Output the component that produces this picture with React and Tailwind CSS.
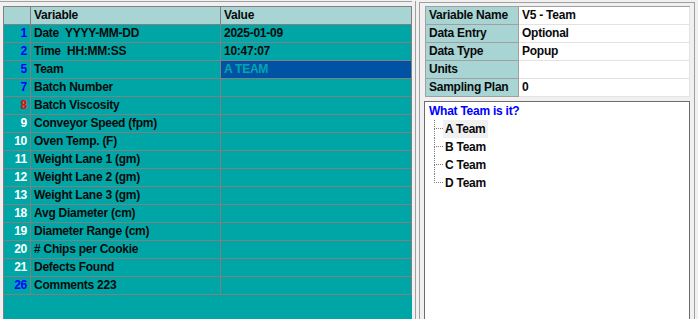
import React from 'react';

const rows = [
  { n: '1', c: 'text-[#0000ff]', label: 'Date  YYYY-MM-DD', value: '2025-01-09' },
  { n: '2', c: 'text-[#0000ff]', label: 'Time  HH:MM:SS', value: '10:47:07' },
  { n: '5', c: 'text-[#0000ff]', label: 'Team', value: 'A TEAM', selected: true },
  { n: '7', c: 'text-[#0000ff]', label: 'Batch Number', value: '' },
  { n: '8', c: 'text-[#ff0000]', label: 'Batch Viscosity', value: '' },
  { n: '9', c: 'text-white', label: 'Conveyor Speed (fpm)', value: '' },
  { n: '10', c: 'text-white', label: 'Oven Temp. (F)', value: '' },
  { n: '11', c: 'text-white', label: 'Weight Lane 1 (gm)', value: '' },
  { n: '12', c: 'text-white', label: 'Weight Lane 2 (gm)', value: '' },
  { n: '13', c: 'text-white', label: 'Weight Lane 3 (gm)', value: '' },
  { n: '18', c: 'text-white', label: 'Avg Diameter (cm)', value: '' },
  { n: '19', c: 'text-white', label: 'Diameter Range (cm)', value: '' },
  { n: '20', c: 'text-white', label: '# Chips per Cookie', value: '' },
  { n: '21', c: 'text-white', label: 'Defects Found', value: '' },
  { n: '26', c: 'text-[#0000ff]', label: 'Comments 223', value: '' },
];

const props = [
  ['Variable Name', 'V5 - Team'],
  ['Data Entry', 'Optional'],
  ['Data Type', 'Popup'],
  ['Units', ''],
  ['Sampling Plan', '0'],
];

const teams = ['A Team', 'B Team', 'C Team', 'D Team'];

const Grid = () => (
  <div className="flex-1 flex flex-col bg-[#00a6a6] border-l border-t border-[#808080]">
    <div className="grid grid-cols-[27px_190px_191px] h-[18px] bg-[#a8d4d4] border-b border-[#808080] leading-[17px]">
      <div className="border-r border-[#808080]" />
      <div className="border-r border-[#808080] pl-[3px]">Variable</div>
      <div className="border-r border-[#808080] pl-[3px]">Value</div>
    </div>
    {rows.map((r) => (
      <div key={r.n} className="grid grid-cols-[27px_190px_191px] h-[18px] border-b border-[#808080] leading-[17px]">
        <div className={`border-r border-[#808080] text-right pr-[3px] ${r.c}`}>{r.n}</div>
        <div className="border-r border-[#808080] pl-[3px] whitespace-pre">{r.label}</div>
        {r.selected ? (
          <div className="border-r border-[#808080] pl-[3px] bg-[#0052a4] text-[#00a8b0]">{r.value}</div>
        ) : (
          <div className="border-r border-[#808080] pl-[3px]">{r.value}</div>
        )}
      </div>
    ))}
  </div>
);

const Props = () => (
  <div className="ml-px border-l border-t border-[#a0a0a0]">
    {props.map(([k, v]) => (
      <div key={k} className="grid grid-cols-[93px_1fr] h-[18px] leading-[17px]">
        <div className="bg-[#a8d4d4] border-r border-b border-[#a0a0a0] pl-[3px]">{k}</div>
        <div className="bg-white border-r border-b border-[#e3e3e3] pl-[3px]">{v}</div>
      </div>
    ))}
  </div>
);

const Tree = () => (
  <div className="mt-[4px] flex-1 bg-white border border-b-0 border-[#6d6d6d] pl-[4px]">
    <div className="h-[18px] leading-[18px] text-[#0000ff]">What Team is it?</div>
    <div className="pl-[5px]">
      {teams.map((t, i) => (
        <div key={t} className="flex h-[18px]">
          <div className="w-[9px] flex flex-col">
            <div className="h-[9px] border-l border-b border-dotted border-[#808080]" />
            {i < teams.length - 1 && <div className="flex-1 border-l border-dotted border-[#808080]" />}
          </div>
          <div className={`leading-[18px] px-[2px] ${i === 0 ? 'bg-[#f0f0f0]' : ''}`}>{t}</div>
        </div>
      ))}
    </div>
  </div>
);

export default function App() {
  return (
    <div
      className="w-[698px] h-[319px] overflow-hidden bg-[#f0f0f0] flex pt-px text-[12px] font-bold tracking-[-0.25px] text-[#0a0a0a]"
      style={{ fontFamily: '"Liberation Sans", Arial, sans-serif' }}
    >
      <div className="w-[412px] flex flex-col border-t border-[#a0a0a0] pl-[3px] pt-[4px]">
        <Grid />
      </div>
      <div className="w-[3px]" />
      <div className="w-px bg-[#a0a0a0]" />
      <div className="w-[3px]" />
      <div className="w-[276px] mt-px flex flex-col border-l border-t border-r border-[#a0a0a0] pl-[4px] pr-[4px] pt-[3px]">
        <Props />
        <Tree />
      </div>
    </div>
  );
}
